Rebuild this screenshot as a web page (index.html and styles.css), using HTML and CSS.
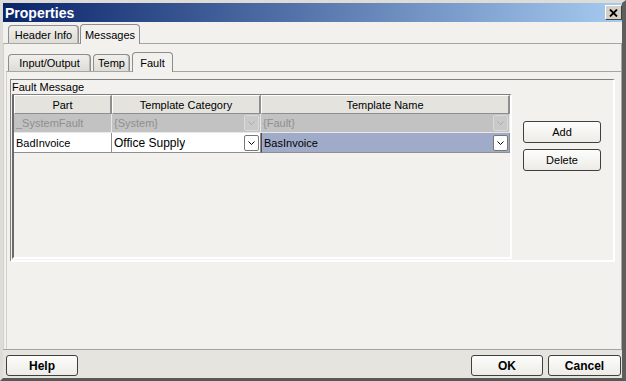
FILE: index.html
```html
<!DOCTYPE html>
<html lang="en">
<head>
    <meta charset="UTF-8">
    <meta name="viewport" content="width=device-width, initial-scale=1.0">
    <title>Properties</title>
    <link rel="stylesheet" href="styles.css">
</head>
<body>
<div class="window">
    <div class="titlebar">
        <span class="title">Properties</span>
        <button class="close-btn" aria-label="Close">
            <svg width="9" height="8" viewBox="0 0 9 8"><path d="M1 0.5 L8 7.5 M8 0.5 L1 7.5" stroke="#000" stroke-width="1.8" fill="none"/></svg>
        </button>
    </div>

    <div class="content">
        <div class="tabs tabs-top">
            <div class="tab tab-header">Header Info</div>
            <div class="tab tab-messages active">Messages</div>
        </div>
        <div class="panel panel-outer">
            <div class="tabs tabs-inner">
                <div class="tab tab-io">Input/Output</div>
                <div class="tab tab-temp">Temp</div>
                <div class="tab tab-fault active">Fault</div>
            </div>
            <div class="panel panel-inner">
                <div class="group">
                    <div class="group-label">Fault Message</div>
                    <div class="group-body">
                        <div class="table-pane">
                            <table class="grid">
                                <colgroup>
                                    <col class="col-part">
                                    <col class="col-cat">
                                    <col class="col-name">
                                </colgroup>
                                <tr>
                                    <th>Part</th>
                                    <th>Template Category</th>
                                    <th>Template Name</th>
                                </tr>
                                <tr class="row-disabled">
                                    <td>_SystemFault</td>
                                    <td>
                                        <div class="combo">
                                            <span class="combo-text">{System}</span>
                                            <span class="arrow"><svg width="7" height="4" viewBox="0 0 7 4"><path d="M0.5 0.5 L3.5 3.5 L6.5 0.5" stroke="#ababab" fill="none"/></svg></span>
                                        </div>
                                    </td>
                                    <td>
                                        <div class="combo">
                                            <span class="combo-text">{Fault}</span>
                                            <span class="arrow"><svg width="7" height="4" viewBox="0 0 7 4"><path d="M0.5 0.5 L3.5 3.5 L6.5 0.5" stroke="#ababab" fill="none"/></svg></span>
                                        </div>
                                    </td>
                                </tr>
                                <tr class="row-normal">
                                    <td>BadInvoice</td>
                                    <td>
                                        <div class="combo">
                                            <span class="combo-text office">Office Supply</span>
                                            <span class="arrow"><svg width="7" height="4" viewBox="0 0 7 4"><path d="M0.5 0.5 L3.5 3.5 L6.5 0.5" stroke="#000" fill="none"/></svg></span>
                                        </div>
                                    </td>
                                    <td class="cell-editing">
                                        <div class="combo">
                                            <span class="combo-text">BasInvoice</span>
                                            <span class="arrow"><svg width="7" height="4" viewBox="0 0 7 4"><path d="M0.5 0.5 L3.5 3.5 L6.5 0.5" stroke="#000" fill="none"/></svg></span>
                                        </div>
                                    </td>
                                </tr>
                            </table>
                        </div>
                        <div class="side">
                            <button class="btn">Add</button>
                            <button class="btn">Delete</button>
                        </div>
                    </div>
                </div>
            </div>
        </div>
    </div>

    <div class="footer">
        <button class="btn btn-main">Help</button>
        <span class="spacer"></span>
        <button class="btn btn-main">OK</button>
        <button class="btn btn-main btn-cancel">Cancel</button>
    </div>
</div>
</body>
</html>
```

FILE: styles.css
```css
* {
    box-sizing: border-box;
}
body {
    margin: 0;
    background-color: #f2f1ee;
    font-family: "Liberation Sans", Arial, sans-serif;
    font-size: 11px;
    color: #000;
}
.window {
    width: 626px;
    height: 381px;
    display: flex;
    flex-direction: column;
    background-color: #f2f1ee;
    border-top: 3px solid #dedcd7;
    border-left: 3px solid #dedcd7;
    border-right: 4px solid #5e5e5e;
    border-bottom: 3px solid #585858;
}

/* title bar */
.titlebar {
    height: 19px;
    display: flex;
    align-items: center;
    justify-content: space-between;
    padding: 0 0 0 2px;
    background: linear-gradient(to right, #0a246a, #a6caf0);
}
.title {
    color: #fff;
    font-weight: bold;
    font-size: 14px;
}
.close-btn {
    width: 17px;
    height: 15px;
    padding: 0;
    display: flex;
    align-items: center;
    justify-content: center;
    background-color: #d4d0c8;
    border: 1px solid;
    border-color: #fff #404040 #404040 #fff;
}

.content {
    flex: 1;
    display: flex;
    flex-direction: column;
}

/* tabs */
.tabs {
    display: flex;
    align-items: flex-end;
    gap: 2px;
}
.tabs-top {
    height: 21px;
    padding-left: 5px;
    gap: 1px;
}
.tabs-inner {
    height: 27px;
    padding-left: 4px;
}
.tab {
    height: 18px;
    padding: 0;
    white-space: nowrap;
    display: flex;
    align-items: center;
    justify-content: center;
    border: 1px solid #8d8d8d;
    border-bottom: none;
    border-radius: 4px 4px 0 0;
    background: linear-gradient(#f0efeb, #dddcd6);
    box-shadow: inset -1px 0 0 #b8b7b2;
}
.tabs-inner .tab {
    height: 17px;
}
.tab.active {
    height: 20px;
    margin-bottom: -1px;
    background: #f2f1ee;
    box-shadow: none;
    position: relative;
}
.tabs-inner .tab.active {
    height: 20px;
}
.tab-header { width: 71px; }
.tab-messages { width: 60px; }
.tab-io { width: 83px; }
.tab-temp { width: 37px; }
.tab-fault { width: 41px; }

.panel {
    flex: 1;
    display: flex;
    flex-direction: column;
    border-top: 1px solid #a7a6a2;
}
.panel-outer {
    border-left: 1px solid #d2d1cc;
    border-right: 1px solid #a7a6a2;
}
.panel-inner {
    margin-left: 2px;
    border-left: 1px solid #d2d1cc;
    padding: 7px 0 0 3px;
}

/* titled group */
.group {
    width: 605px;
    height: 183px;
    border-top: 1px solid #808080;
    border-left: 1px solid #808080;
    border-right: 2px solid #fff;
    border-bottom: 2px solid #fff;
    padding: 0 0 1px 1px;
    display: flex;
    flex-direction: column;
}
.group-label {
    height: 14px;
    line-height: 14px;
}
.group-body {
    flex: 1;
    display: flex;
}
.table-pane {
    width: 500px;
    border-top: 1px solid #808080;
    border-left: 2px solid #6a6a6a;
    border-right: 2px solid #fff;
    border-bottom: 2px solid #fff;
}
.side {
    flex: 1;
    display: flex;
    flex-direction: column;
    align-items: flex-start;
    gap: 6px;
    padding: 27px 0 0 11px;
}

/* table */
.grid {
    border-collapse: separate;
    border-spacing: 0;
    table-layout: fixed;
    width: 496px;
}
.col-part { width: 98px; }
.col-cat { width: 149px; }
.col-name { width: 249px; }
.grid th {
    height: 19px;
    padding: 0;
    font-weight: normal;
    text-align: center;
    background-color: #e4e3de;
    border-top: 1px solid #fff;
    border-left: 1px solid #fff;
    border-right: 2px solid #8e8e8e;
    border-bottom: 1px solid #8e8e8e;
}
.grid td {
    height: 19px;
    padding: 0 0 0 2px;
    white-space: nowrap;
    border-right: 1px solid #e8e8e8;
    border-bottom: 1px solid #e8e8e8;
}
.row-disabled td {
    background-color: #c2c2c2;
    color: #8f8f8f;
}
.row-normal td {
    background-color: #fff;
    height: 20px;
    border-bottom-color: #8e8e8e;
    border-right-color: #8e8e8e;
}
.row-normal td.cell-editing {
    background-color: #a0abc9;
    border-left: 1px solid #505050;
    padding-left: 2px;
}
.combo {
    display: flex;
    align-items: center;
    justify-content: space-between;
}
.combo-text {
    overflow: hidden;
}
.office {
    font-size: 12px;
}
.arrow {
    width: 15px;
    height: 16px;
    display: flex;
    align-items: center;
    justify-content: center;
    border: 1px solid #777;
    border-radius: 2px;
    background-color: #fff;
    margin-right: 1px;
}
.row-disabled .arrow {
    border-color: #dadada;
    background-color: #c9c9c9;
}

/* buttons */
.btn {
    width: 78px;
    height: 22px;
    padding: 0;
    font-family: inherit;
    font-size: 11px;
    color: #000;
    border: 1px solid #3f3f3f;
    border-radius: 3px;
    background: linear-gradient(#fdfdfc, #ecebe6);
}
.footer {
    height: 29px;
    display: flex;
    gap: 5px;
    padding: 5px 1px 0 3px;
    border-top: 1px solid #a3a3a3;
    background-color: #e5e4df;
}
.btn-main {
    width: 72px;
    height: 21px;
    font-size: 12px;
    font-weight: bold;
}
.btn-cancel {
    width: 73px;
}
.spacer {
    flex: 1;
}
```
